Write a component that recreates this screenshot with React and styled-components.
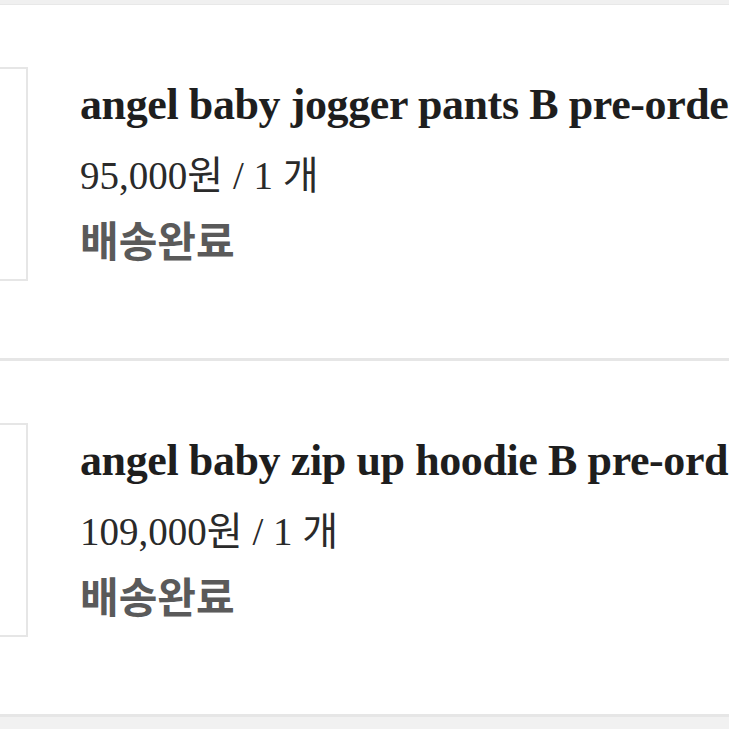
import styled, { createGlobalStyle } from "styled-components";

const Global = createGlobalStyle`
  html, body {
    margin: 0;
    padding: 0;
    background: #ffffff;
  }
`;

const Page = styled.div`
  width: 729px;
  height: 729px;
  overflow: hidden;
  display: flex;
  flex-direction: column;
  background: #f1f1f1;
`;

const TopBand = styled.div`
  height: 4px;
  flex: none;
  background: #f0f0f0;
  border-bottom: 1px solid #e8e8e8;
`;

const List = styled.div`
  display: flex;
  flex-direction: column;
  background: #fff;
`;

const Item = styled.div`
  height: 356px;
  display: flex;
  align-items: flex-start;
  gap: 52px;
  padding-top: 62px;
  box-sizing: border-box;
  border-bottom: 3px solid #e6e6e6;
  overflow: hidden;
`;

const Thumb = styled.div`
  flex: none;
  box-sizing: border-box;
  width: 28px;
  height: 214px;
  border: 2px solid #e6e6e6;
  border-left: none;
  background: #fff;
`;

const Info = styled.div`
  display: flex;
  flex-direction: column;
  white-space: nowrap;
  padding-top: 2px;
`;

const Title = styled.div`
  font-family: "Liberation Serif", "Noto Serif", serif;
  font-weight: 700;
  font-size: 44px;
  line-height: 72px;
  color: #1e1e1e;
  letter-spacing: -0.4px;
`;

const Price = styled.div`
  font-family: "Liberation Serif", "Noto Sans CJK KR", serif;
  font-size: 39px;
  line-height: 70px;
  color: #2a2a2a;
`;

const Status = styled.div`
  font-family: "Noto Sans CJK KR", "Noto Sans", sans-serif;
  font-weight: 700;
  font-size: 42px;
  line-height: 56px;
  color: #5a5a5a;
`;

const items = [
  { title: "angel baby jogger pants B pre-order", price: "95,000원", qty: 1 },
  { title: "angel baby zip up hoodie B pre-order", price: "109,000원", qty: 1 },
];

export default function App() {
  return (
    <Page>
      <Global />
      <TopBand />
      <List>
        {items.map((it) => (
          <Item key={it.title}>
            <Thumb />
            <Info>
              <Title>{it.title}</Title>
              <Price>
                {it.price} / {it.qty} 개
              </Price>
              <Status>배송완료</Status>
            </Info>
          </Item>
        ))}
      </List>
    </Page>
  );
}
